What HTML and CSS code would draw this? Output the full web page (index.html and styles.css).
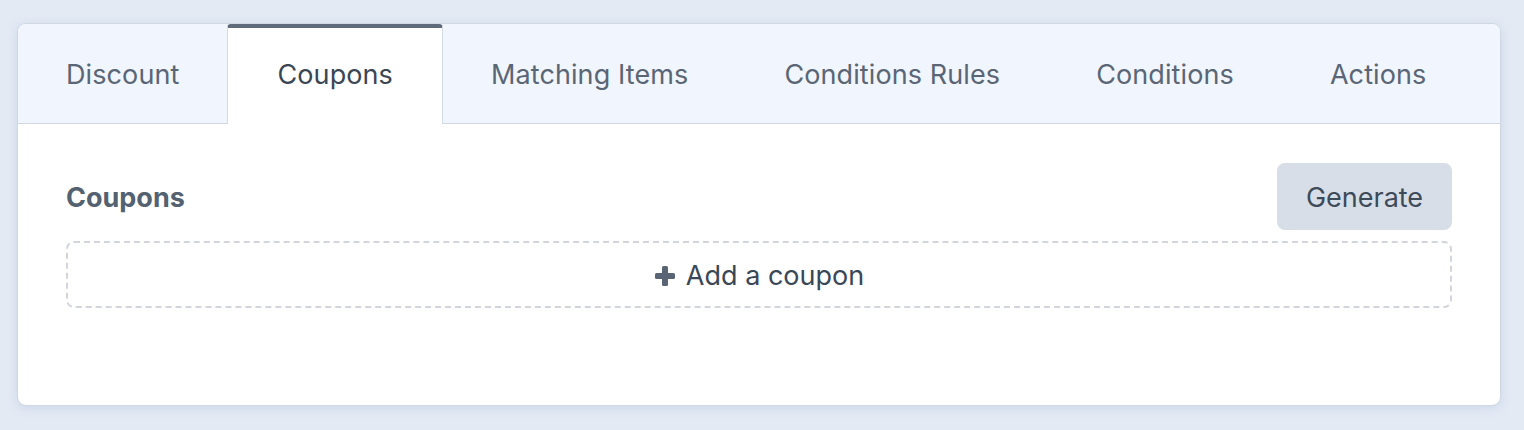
FILE: index.html
```html
<!DOCTYPE html>
<html>
<head>
<meta charset="utf-8">
<link rel="stylesheet" href="styles.css">
</head>
<body>
<div class="card">
  <div class="tabs">
    <div class="tab">Discount</div>
    <div class="tab active">Coupons</div>
    <div class="tab">Matching Items</div>
    <div class="tab">Conditions Rules</div>
    <div class="tab">Conditions</div>
    <div class="tab">Actions</div>
  </div>
  <div class="content">
    <div class="header">
      <div class="title">Coupons</div>
      <button class="btn">Generate</button>
    </div>
    <div class="add">
      <svg class="plus" width="22" height="22" viewBox="0 0 22 22"><rect x="8" y="1" width="6" height="20" rx="1.5" fill="#596574"/><rect x="1" y="8" width="20" height="6" rx="1.5" fill="#596574"/></svg>
      <span>Add a coupon</span>
    </div>
  </div>
</div>
</body>
</html>
```
FILE: styles.css
```css
html, body { margin: 0; padding: 0; }
body {
  background: #e3eaf4;
  font-family: Inter, "Noto Sans", sans-serif;
  padding: 23px 22px 0 17px;
  height: 430px;
  box-sizing: border-box;
}
.card {
  background: #fff;
  border: 1px solid #cfd8e3;
  border-radius: 9px;
  box-shadow: 0 2px 10px rgba(160, 180, 205, 0.35);
  overflow: hidden;
  width: 1484px;
  box-sizing: border-box;
}
.tabs {
  display: flex;
  background: #f1f5fd;
  border-bottom: 1px solid #cfd8e3;
  height: 100px;
  box-sizing: border-box;
}
.tab {
  padding: 0 48px 3px;
  display: flex;
  align-items: center;
  font-size: 27px;
  letter-spacing: 0.1px;
  color: #5a6675;
  box-sizing: border-box;
  border-top: 4px solid transparent;
}
.tab.active {
  background: #fff;
  color: #3a4654;
  border-top: 4px solid #5f6b7a;
  border-left: 1px solid #d3dbe6;
  border-right: 1px solid #d3dbe6;
  border-radius: 4px 4px 0 0;
  margin-bottom: -1px;
  padding: 0 49px 3px 49px;
}
.content {
  padding: 39px 48px 97px 48px;
}
.header {
  display: flex;
  justify-content: space-between;
  align-items: center;
  margin-bottom: 11px;
}
.title {
  font-size: 27px;
  font-weight: 700;
  color: #546170;
  padding-top: 1px;
}
.btn {
  font-family: inherit;
  font-size: 27px;
  color: #3d4a58;
  background: #d7dee8;
  border: none;
  border-radius: 8px;
  height: 67px;
  width: 175px;
  padding-top: 2px;
}
.add {
  height: 67px;
  border: 2px dashed #d2d6dc;
  border-radius: 8px;
  box-sizing: border-box;
  display: flex;
  align-items: center;
  justify-content: center;
  gap: 10px;
  font-size: 27px;
  color: #3a4756;
  padding-top: 2px;
}
```
